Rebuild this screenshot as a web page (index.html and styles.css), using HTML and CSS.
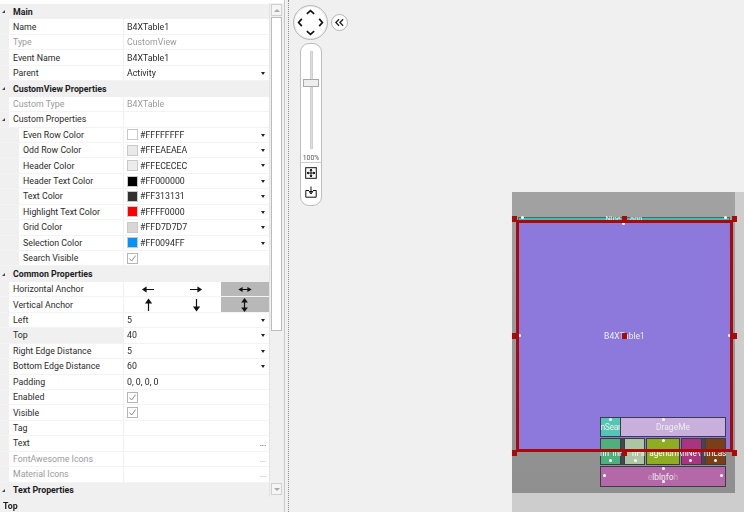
FILE: index.html
```html
<!DOCTYPE html>
<html lang="en">
<head>
<meta charset="utf-8">
<title>B4XTable1 designer</title>
<link rel="stylesheet" href="styles.css">
</head>
<body>
<div class="app">
  <aside class="side">
    <div class="grid-wrap">
      <div class="grid">
        <div class="cat"><i class="tri"></i><span>Main</span></div>
        <div class="row"><span class="k">Name</span><span class="v">B4XTable1</span></div>
        <div class="row off"><span class="k">Type</span><span class="v">CustomView</span></div>
        <div class="row"><span class="k">Event Name</span><span class="v">B4XTable1</span></div>
        <div class="row"><span class="k">Parent</span><span class="v">Activity<i class="dd"></i></span></div>
        <div class="cat"><i class="tri"></i><span>CustomView Properties</span></div>
        <div class="row off"><span class="k">Custom Type</span><span class="v">B4XTable</span></div>
        <div class="row sub"><i class="tri"></i><span class="k">Custom Properties</span><span class="v"></span></div>
        <div class="row in"><span class="k">Even Row Color</span><span class="v"><b class="sw sw-ffffff"></b>#FFFFFFFF<i class="dd"></i></span></div>
        <div class="row in"><span class="k">Odd Row Color</span><span class="v"><b class="sw sw-eaeaea"></b>#FFEAEAEA<i class="dd"></i></span></div>
        <div class="row in"><span class="k">Header Color</span><span class="v"><b class="sw sw-ececec"></b>#FFECECEC<i class="dd"></i></span></div>
        <div class="row in"><span class="k">Header Text Color</span><span class="v"><b class="sw sw-000000"></b>#FF000000<i class="dd"></i></span></div>
        <div class="row in"><span class="k">Text Color</span><span class="v"><b class="sw sw-313131"></b>#FF313131<i class="dd"></i></span></div>
        <div class="row in"><span class="k">Highlight Text Color</span><span class="v"><b class="sw sw-ff0000"></b>#FFFF0000<i class="dd"></i></span></div>
        <div class="row in"><span class="k">Grid Color</span><span class="v"><b class="sw sw-d7d7d7"></b>#FFD7D7D7<i class="dd"></i></span></div>
        <div class="row in"><span class="k">Selection Color</span><span class="v"><b class="sw sw-0094ff"></b>#FF0094FF<i class="dd"></i></span></div>
        <div class="row in"><span class="k">Search Visible</span><span class="v"><svg class="chk" viewBox="0 0 11 11"><rect x=".5" y=".5" width="10" height="10" fill="#fff" stroke="#b5b5b5"/><path d="M2.5 5.6 4.6 8 8.6 2.6" fill="none" stroke="#8a8a8a"/></svg></span></div>
        <div class="cat"><i class="tri"></i><span>Common Properties</span></div>
        <div class="row"><span class="k">Horizontal Anchor</span><span class="v anchors">
          <span class="an"><svg viewBox="0 0 14 9" class="ah"><path d="M13 4.5H3M5 2.5 2 4.5 5 6.500Z"/></svg></span>
          <span class="an"><svg viewBox="0 0 14 9" class="ah"><path d="M1 4.5H11M9 2.500 12 4.500 9 6.500Z"/></svg></span>
          <span class="an on"><svg viewBox="0 0 14 9" class="ah"><path d="M3 4.5H11M4 3 1.500 4.500 4 6ZM10 3 12.500 4.500 10 6Z"/></svg></span>
        </span></div>
        <div class="row"><span class="k">Vertical Anchor</span><span class="v anchors">
          <span class="an"><svg viewBox="0 0 9 14" class="av"><path d="M4.500 13V3M2 5 4.500 1.500 7 5Z"/></svg></span>
          <span class="an"><svg viewBox="0 0 9 14" class="av"><path d="M4.500 1V11M2 9 4.500 12.500 7 9Z"/></svg></span>
          <span class="an on"><svg viewBox="0 0 9 14" class="av"><path d="M4.500 3V11M2.300 4 4.500 1 6.700 4ZM2.300 10 4.500 13 6.700 10Z"/></svg></span>
        </span></div>
        <div class="row"><span class="k">Left</span><span class="v">5<i class="dd"></i></span></div>
        <div class="row sel"><span class="k">Top</span><span class="v">40<i class="dd"></i></span></div>
        <div class="row"><span class="k">Right Edge Distance</span><span class="v">5<i class="dd"></i></span></div>
        <div class="row"><span class="k">Bottom Edge Distance</span><span class="v">60<i class="dd"></i></span></div>
        <div class="row"><span class="k">Padding</span><span class="v">0, 0, 0, 0</span></div>
        <div class="row"><span class="k">Enabled</span><span class="v"><svg class="chk" viewBox="0 0 11 11"><rect x=".5" y=".5" width="10" height="10" fill="#fff" stroke="#b5b5b5"/><path d="M2.500 5.600 4.600 8 8.600 2.600" fill="none" stroke="#8a8a8a"/></svg></span></div>
        <div class="row"><span class="k">Visible</span><span class="v"><svg class="chk" viewBox="0 0 11 11"><rect x=".5" y=".5" width="10" height="10" fill="#fff" stroke="#b5b5b5"/><path d="M2.500 5.600 4.600 8 8.600 2.600" fill="none" stroke="#8a8a8a"/></svg></span></div>
        <div class="row"><span class="k">Tag</span><span class="v"></span></div>
        <div class="row"><span class="k">Text</span><span class="v"><em class="more">...</em></span></div>
        <div class="row off"><span class="k">FontAwesome Icons</span><span class="v"><em class="more">...</em></span></div>
        <div class="row off"><span class="k">Material Icons</span><span class="v"><em class="more">...</em></span></div>
        <div class="cat"><i class="tri"></i><span>Text Properties</span></div>
      </div>
      <div class="scroll">
        <span class="sbtn"><i class="up"></i></span>
        <span class="thumb"></span>
        <span class="sbtn"><i class="down"></i></span>
      </div>
    </div>
    <div class="status">Top</div>
  </aside>
  <div class="gutter"></div>
  <main class="canvas">
    <div class="tools">
      <div class="nav-row">
        <div class="pad">
          <svg viewBox="0 0 36 36" class="pad-ic"><path d="M14 8.500 18 5 22 8.500M14 27.500 18 31 22 27.500M8.500 14 5 18 8.500 22M27.500 14 31 18 27.500 22"/></svg>
        </div>
        <div class="collapse"><svg viewBox="0 0 12 10"><path d="M5.500 1.500 2 5 5.500 8.500M10 1.500 6.500 5 10 8.500"/></svg></div>
      </div>
      <div class="zoom">
        <div class="slider"><span class="rail"></span><span class="knob"></span></div>
        <div class="pct">100%</div>
        <div class="zbtns">
          <svg viewBox="0 0 12 12" class="zi"><rect x=".7" y=".7" width="10.600" height="10.600"/><path d="M6 2.500V9.500M2.500 6H9.500M6 2 5 3.300H7ZM6 10 5 8.700H7ZM2 6 3.300 5V7ZM10 6 8.700 5V7Z"/></svg>
          <svg viewBox="0 0 12 12" class="zi"><path d="M4 4.500H.8V11.200H11.200V4.500H8M6 .5V7.500M4.200 5.500 6 8 7.800 5.500Z"/></svg>
        </div>
      </div>
    </div>
    <div class="backdrop">
      <div class="device">
        <div class="dev-view tb-strip"><span class="lbl strip-lbl">Nine&nbsp;&nbsp;&nbsp;&nbsp;&nbsp;ann</span></div>
        <div class="dev-view table"><span class="lbl">B4XTable1</span></div>
        <div class="dev-view mini search"><span class="lbl">nSear</span></div>
        <div class="dev-view mini drag"><span class="lbl">DrageMe</span></div>
        <div class="dev-view mini gap g1"></div>
        <div class="dev-view mini gap g2"></div>
        <div class="dev-view mini b1"></div>
        <div class="dev-view mini b2"></div>
        <div class="dev-view mini b3"></div>
        <div class="dev-view mini b4"></div>
        <div class="dev-view mini b5"></div>
        <span class="lbl over-row">nn inFir nFir agenum\nNe\ ItnLas</span>
        <div class="dev-view mini info"><span class="lbl"><span class="faint">e</span>lblnfo<span class="faint">h</span></span></div>
        <span class="dot d1"></span><span class="dot d2"></span><span class="dot d3"></span><span class="dot d4"></span><span class="dot d5"></span>
        <span class="dot d6"></span><span class="dot d7"></span><span class="dot d8"></span><span class="dot d9"></span><span class="dot d10"></span>
        <span class="dot d11"></span><span class="dot d12"></span><span class="dot d13"></span><span class="dot d14"></span><span class="dot d15"></span><span class="dot d16"></span>
        <div class="selbox"></div>
        <span class="h h1"></span><span class="h h2"></span><span class="h h3"></span><span class="h h4"></span>
        <span class="h h5"></span><span class="h h6"></span><span class="h h7"></span><span class="h h8"></span>
        <span class="h h9"></span>
      </div>
    </div>
  </main>
</div>
</body>
</html>
```
FILE: styles.css
```css
* { box-sizing: border-box; }
html, body { margin: 0; height: 100%; }
body { font-family: "Roboto", "Noto Sans", sans-serif; font-size: 8.800px; color: #2a2a2a; overflow: hidden; background: #f0f0f0; }
.app { display: flex; width: 744px; height: 512px; overflow: hidden; filter: blur(.3px); }

.side { width: 284px; height: 512px; flex: none; display: flex; flex-direction: column; background: #f0f0f0; }
.grid-wrap { flex: 1; min-height: 0; display: flex; border-top: 3px solid #fff; box-shadow: 0 -1px 0 #ccc; }
.grid { width: 270px; flex: none; display: flex; flex-direction: column; padding-top: 1px; background: #fff; overflow: hidden; border-right: 1px solid #e4e4e4; }

.cat, .row { height: 15.450px; flex: none; display: flex; align-items: center; line-height: 12px; }
.cat { background: #f0f0f0; font-weight: 700; padding-left: 2px; color: #1c1c1c; }
.cat .tri { margin-right: 8px; }
.sub .tri { margin-right: 8px; }
.tri { width: 0; height: 0; flex: none; border-style: solid; border-width: 0 0 3px 3px; border-color: transparent transparent #444 transparent; }

.row { background: linear-gradient(#f0f0f0, #f0f0f0) 0 0 / 9px 100% no-repeat, #fff; border-bottom: 1px solid #f3f3f3; }
.k { width: 123px; padding-left: 13px; flex: none; white-space: nowrap; }
.v { flex: 1; height: 100%; display: flex; align-items: center; padding-left: 3px; border-left: 1px solid #f0f0f0; position: relative; white-space: nowrap; }
.off { color: #9a9a9a; }
.in { background: linear-gradient(#f0f0f0, #f0f0f0) 0 0 / 19px 100% no-repeat, #fff; }
.in .k { padding-left: 23px; }
.sub { padding-left: 2px; background: linear-gradient(#f0f0f0, #f0f0f0) 0 0 / 9px 100% no-repeat, #fff; }
.sub .k { width: 110px; padding-left: 0; }
.sel .k { background: #f0f0f0; height: 100%; display: flex; align-items: center; }

.dd { position: absolute; right: 4px; top: 6px; width: 0; height: 0; border-style: solid; border-width: 3px 2.500px 0; border-color: #222 transparent transparent; }
.sw { width: 11px; height: 11px; margin-right: 2px; border: 1px solid #c9c9c9; flex: none; }
.sw-ffffff { background: #fff; }
.sw-eaeaea { background: #eaeaea; }
.sw-ececec { background: #ececec; }
.sw-000000 { background: #000; }
.sw-313131 { background: #313131; }
.sw-ff0000 { background: #f00; }
.sw-d7d7d7 { background: #d7d7d7; }
.sw-0094ff { background: #0094ff; }
.chk { width: 11px; height: 11px; display: block; }
.more { position: absolute; right: 3px; top: 1px; font-style: normal; font-size: 9px; letter-spacing: -.3px; }

.anchors { padding-left: 0; display: grid; grid-template-columns: repeat(3, 1fr); }
.an { height: 100%; display: flex; align-items: center; justify-content: center; }
.an.on { background: #b8b8b8; }
.an svg { fill: #111; stroke: #111; stroke-width: 1.200; }
.ah { width: 14px; height: 9px; }
.av { width: 9px; height: 14px; }

.scroll { width: 12px; flex: none; display: flex; flex-direction: column; padding: 1px 0 2px 1px; background: #f0f0f0; }
.sbtn { height: 12px; flex: none; background: #f5f5f5; border: 1px solid #cfcfcf; display: flex; align-items: center; justify-content: center; }
.sbtn i { width: 0; height: 0; border-style: solid; border-color: transparent; }
.sbtn .up { border-width: 0 3px 3px; border-bottom-color: #aaa; }
.sbtn .down { border-width: 3px 3px 0; border-top-color: #aaa; }
.thumb { height: 314px; flex: none; margin-top: 1px; background: #fff; border: 1px solid #bcbcbc; }
.scroll .sbtn:last-child { margin-top: auto; }

.status { height: 15px; flex: none; padding-left: 3px; font-weight: 700; line-height: 18px; background: #f0f0f0; color: #1c1c1c; }

.gutter { width: 5px; flex: none; border-left: 1px solid #c8c8c8; border-right: 1px dotted #8a8a8a; background: #f0f0f0; }

.canvas { position: relative; flex: 1; height: 512px; background: #f0f0f0; overflow: hidden; }
.tools { position: absolute; left: 4px; top: 5px; display: flex; flex-direction: column; gap: 3px; width: 62px; }
.nav-row { display: flex; align-items: center; gap: 3px; }
.pad { width: 35px; height: 35px; border-radius: 50%; background: #fff; border: 1px solid #b5b5b5; box-shadow: inset 0 0 0 1px #eee; }
.pad-ic { width: 33px; height: 33px; display: block; fill: none; stroke: #111; stroke-width: 1.800; }
.collapse { width: 17px; height: 17px; border-radius: 50%; background: #fff; border: 1px solid #b5b5b5; display: flex; align-items: center; justify-content: center; }
.collapse svg { width: 11px; height: 9px; fill: none; stroke: #222; stroke-width: 1.500; }
.zoom { width: 22px; margin-left: 7px; height: 163px; background: #fff; border: 1px solid #bdbdbd; border-radius: 9px; display: flex; flex-direction: column; align-items: center; }
.slider { position: relative; width: 100%; height: 109px; flex: none; display: flex; justify-content: center; padding-top: 7px; }
.rail { width: 3px; height: 98px; background: #dcdcdc; border: 1px solid #d0d0d0; }
.knob { position: absolute; left: 2px; top: 35px; width: 16px; height: 8px; background: #eee; border: 1px solid #a8a8a8; }
.pct { font-size: 6.800px; line-height: 10px; color: #555; height: 10px; width: 100%; text-align: center; border-bottom: 1px solid #ccc; flex: none; }
.zbtns { display: flex; flex-direction: column; gap: 7px; padding-top: 4px; }
.zi { width: 12px; height: 12px; fill: none; stroke: #111; stroke-width: 1; display: block; }

.backdrop { position: absolute; left: 223px; top: 192px; width: 232px; height: 320px; background: #cdcdcd; }
.device { position: relative; width: 223px; height: 301px; background: linear-gradient(#a2a2a2, #8f8f8f); }
.dev-view { position: absolute; display: flex; align-items: center; justify-content: center; }
.lbl { color: #eee; font-size: 8.500px; white-space: nowrap; }
.faint { opacity: .4; }
.tb-strip { left: 6px; top: 25px; width: 212px; height: 4px; background: #4fb9ae; border: 1px solid #3f6f6a; }
.strip-lbl { font-size: 7.500px; line-height: 4px; }
.table { left: 5px; top: 29px; width: 215px; height: 230px; background: #8c79db; }
.mini { border: 1px solid #3b3b4a; }
.search { left: 88px; top: 225px; width: 21px; height: 20px; background: #54c6b4; }
.search .lbl { font-size: 8.500px; letter-spacing: -.3px; }
.drag { left: 108px; top: 225px; width: 106px; height: 20px; background: #c9afdc; }
.gap { background: #46464f; }
.g1 { left: 108px; top: 246px; width: 5px; height: 27px; }
.g2 { left: 189px; top: 246px; width: 5px; height: 27px; }
.b1 { left: 88px; top: 246px; width: 21px; height: 27px; background: #4fb07e; }
.b2 { left: 112px; top: 246px; width: 21px; height: 27px; background: #acc6a4; }
.b3 { left: 134px; top: 246px; width: 34px; height: 27px; background: #90ad22; }
.b4 { left: 169px; top: 246px; width: 21px; height: 27px; background: #a93580; }
.b5 { left: 193px; top: 246px; width: 21px; height: 27px; background: #7a3f16; }
.over-row { position: absolute; left: 88px; top: 256px; width: 126px; text-align: center; font-size: 8.200px; word-spacing: 1.500px; line-height: 10px; color: #fff; }
.info { left: 88px; top: 274px; width: 126px; height: 21px; background: #b468a8; }
.dot { position: absolute; width: 3px; height: 3px; border-radius: 50%; background: #fff; }
.d1 { left: 110px; top: 30px; }
.d2 { left: 6px; top: 142px; }
.d3 { left: 216px; top: 142px; }
.d4 { left: 97px; top: 226px; }
.d5 { left: 150px; top: 226px; }
.d6 { left: 97px; top: 267px; }
.d7 { left: 122px; top: 267px; }
.d8 { left: 150px; top: 247px; }
.d9 { left: 177px; top: 267px; }
.d10 { left: 202px; top: 267px; }
.d11 { left: 91px; top: 282px; }
.d12 { left: 208px; top: 282px; }
.d13 { left: 150px; top: 275px; }
.d14 { left: 150px; top: 288px; }
.d15 { left: 9px; top: 24px; }
.d16 { left: 212px; top: 24px; }
.selbox { position: absolute; left: 4px; top: 28px; width: 217px; height: 232px; border: 3px solid #a80a0a; }
.h { position: absolute; width: 5px; height: 6px; background: #a80a0a; }
.h1 { left: 0; top: 24px; }
.h2 { left: 110px; top: 24px; }
.h3 { left: 220px; top: 24px; }
.h4 { left: 0; top: 141px; }
.h5 { left: 220px; top: 141px; }
.h6 { left: 0; top: 258px; }
.h7 { left: 110px; top: 258px; }
.h8 { left: 220px; top: 258px; }
.h9 { left: 110px; top: 141px; }
```
